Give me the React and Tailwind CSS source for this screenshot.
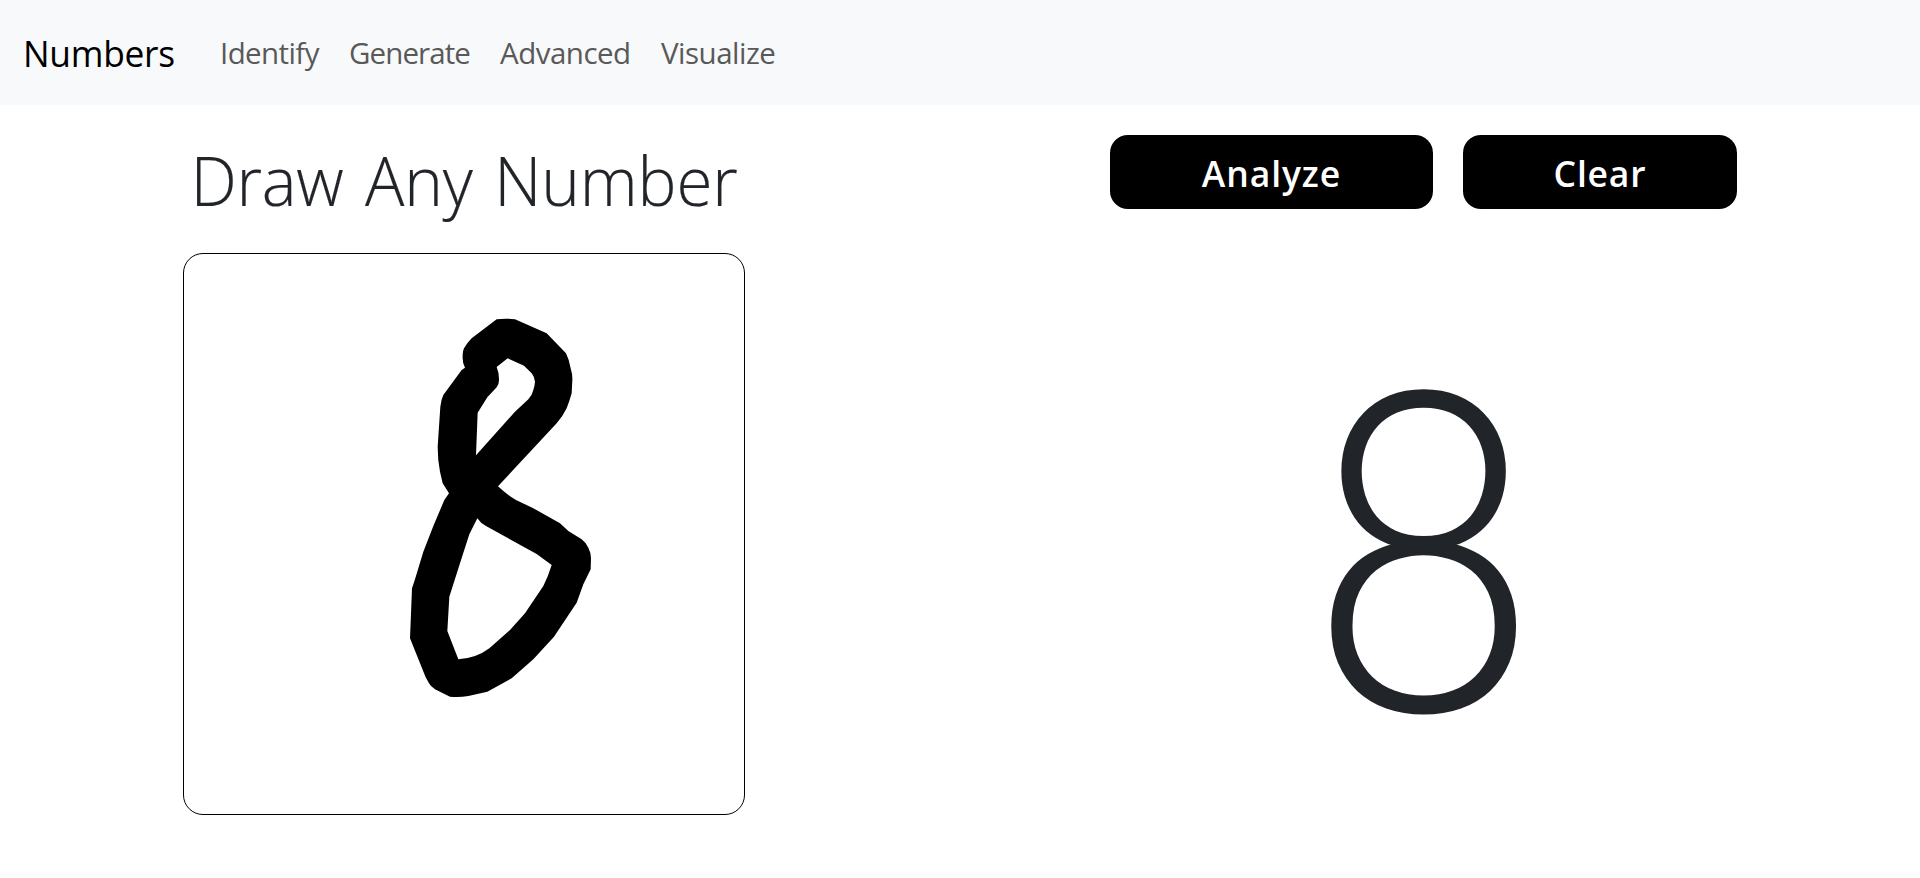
const links = [
  { label: "Identify", box: "w-[99px] tracking-[-0.6px]" },
  { label: "Generate", box: "w-[121px] tracking-[-0.9px]" },
  { label: "Advanced", box: "w-[131px] tracking-[-0.5px]" },
  { label: "Visualize", box: "w-[115px] tracking-[-0.5px]" },
];

function Navbar() {
  return (
    <nav className="flex h-[105px] items-center bg-[#f8f9fa] pl-[23px] whitespace-nowrap">
      <a className="w-[197px] origin-left scale-x-[0.955] text-[37px] leading-[56px] tracking-[-0.3px] text-black">Numbers</a>
      <div className="flex gap-[30px] text-[29.5px] leading-[44px] text-[#595959]">
        {links.map((l) => (
          <a key={l.label} className={l.box}>{l.label}</a>
        ))}
      </div>
    </nav>
  );
}

function Sketch() {
  return (
    <svg viewBox="-648 -138 1680 1680" className="block h-full w-full" fillRule="evenodd">
      <path d="M290 58Q317 54 345 58L440 100L498 160Q508 180 512 205Q518 225 517 240L515 280Q508 305 500 325Q489 348 470 370L294 559Q318 582 348 600L400 625L480 670L505 693L545 718Q558 728 565 743Q573 758 573 775L572 808L550 853L530 908L462 1010L400 1078L335 1135L262 1175L205 1188Q178 1193 150 1190L105 1168Q92 1160 87 1150L77 1132L30 1015L36 865L45 838L70 755L100 678L133 600L147 580L128 550L120 515Q113 480 113 440L121 320Q123 300 130 285L185 210L195 203Q187 190 188 170Q187 156 192 145Q201 129 215 115Z M323 175L372 197L395 220Q405 233 405 245Q404 259 400 270Q396 287 385 298L345 335L228 466L233 338L262 292L290 262Q298 250 297 237Q297 218 290 201Z M232 655Q241 669 258 678L410 762L455 795Q445 828 430 858L375 940L330 990L268 1045Q247 1061 225 1068Q202 1076 175 1078L142 993L148 890L180 790L208 703Z" />
    </svg>
  );
}

function ActionButton({ children, className }) {
  return (
    <button className={`h-[74px] rounded-[18px] bg-black pt-[2px] text-center text-[35.5px] leading-[72px] font-semibold text-white ${className}`}>
      {children}
    </button>
  );
}

export default function App() {
  return (
    <div className="h-[878px] overflow-hidden bg-white font-['Open_Sans','Noto_Sans',sans-serif] text-[#212529]">
      <Navbar />
      <main className="flex">
        <section className="flex w-[928px] flex-col items-center pt-[30px]">
          <h1 className="mb-[32px] h-[86px] scale-x-[0.95] text-[69px] leading-[89px] font-light tracking-[-0.2px] whitespace-nowrap [-webkit-text-stroke:0.2px_#212529] [word-spacing:5px]">Draw Any Number</h1>
          <div className="h-[562px] w-[562px] rounded-[20px] border border-black">
            <Sketch />
          </div>
        </section>
        <section className="flex flex-1 flex-col items-center pt-[30px] pr-px">
          <div className="flex gap-[30px]">
            <ActionButton className="w-[323px] tracking-[0.9px]">Analyze</ActionButton>
            <ActionButton className="w-[274px] tracking-[0.8px]">Clear</ActionButton>
          </div>
          <div className="mt-[28px] ml-px h-[600px] scale-x-[0.89] font-['Lato'] text-[447px] leading-[600px] font-light [-webkit-text-stroke:2px_#212529]">8</div>
        </section>
      </main>
    </div>
  );
}
